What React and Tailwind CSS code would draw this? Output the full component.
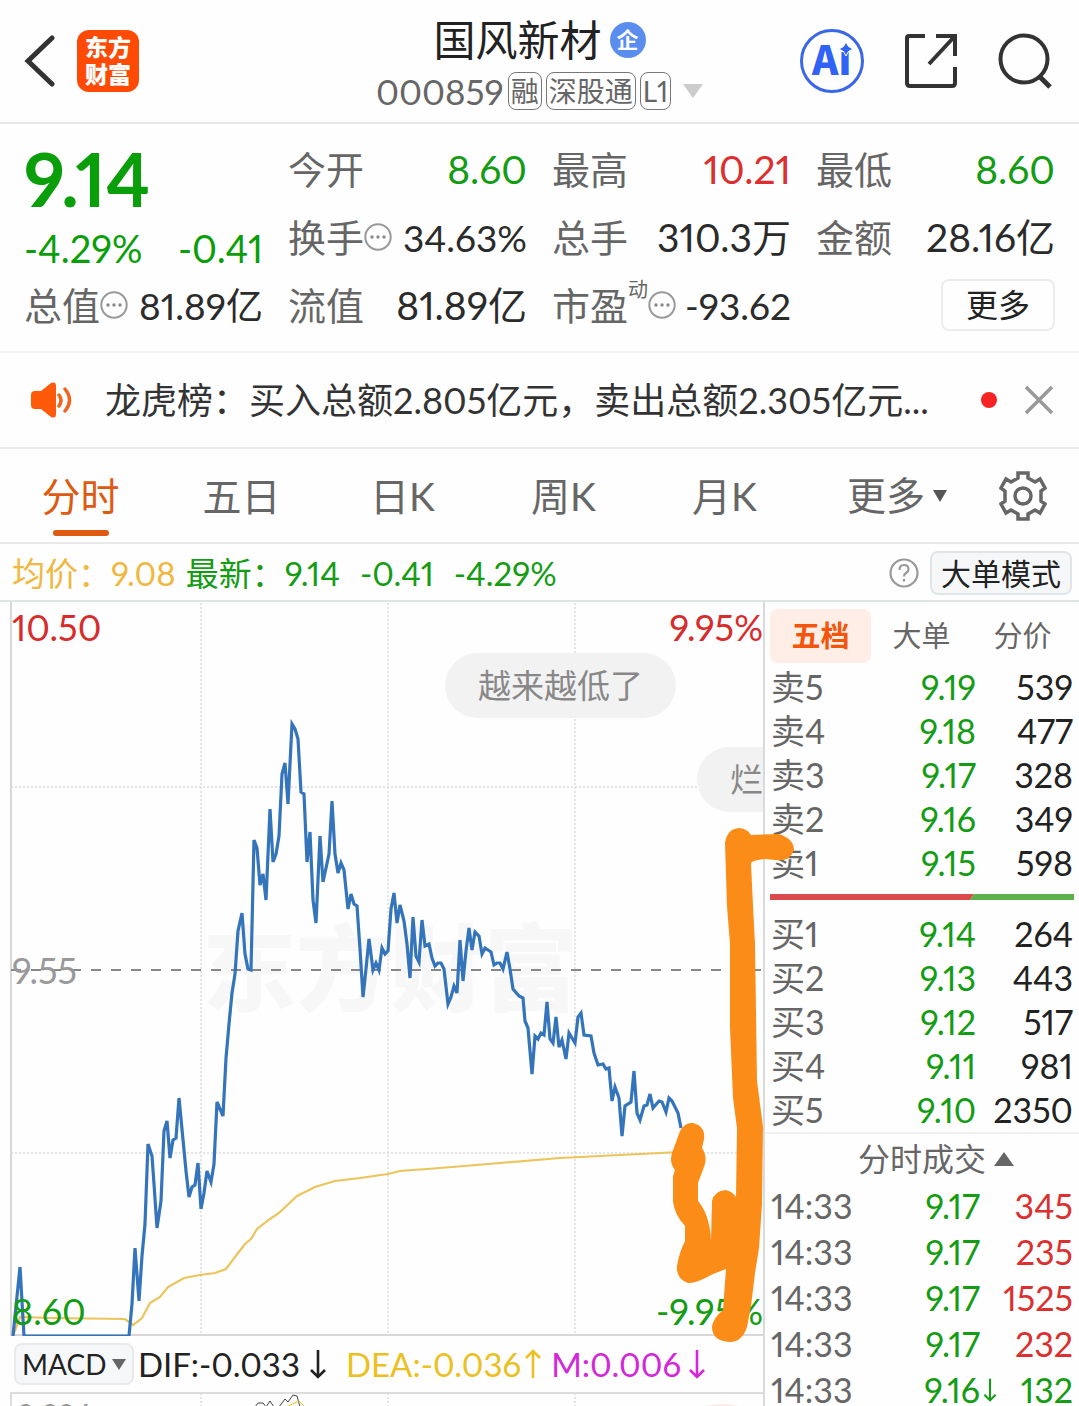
import React, { useState } from "react";

const PRICE_LINE =
  "13,1335 20,1266 24,1335 129,1335 132,1303 135,1247 139,1300 142,1255 145,1223 148,1143 152,1155 154,1183 157,1227 161,1200 164,1130 167,1120 170,1157 173,1139 176,1137 179,1097 186,1170 189,1196 192,1186 195,1184 198,1162 201,1208 204,1192 207,1170 211,1181 214,1163 217,1101 223,1115 226,1057 229,1023 232,992 235,973 238,930 242,912 245,953 248,968 251,969 254,839 257,847 260,884 263,873 266,899 270,808 273,861 276,853 279,835 282,773 285,762 288,803 292,723 295,728 298,738 301,791 304,793 307,861 310,831 313,899 316,922 320,835 323,881 329,853 332,800 335,853 338,872 341,862 344,869 348,908 351,893 354,903 357,905 360,948 363,996 366,968 369,938 373,969 376,962 379,969 382,947 385,953 388,950 391,908 394,892 397,922 400,904 404,920 407,943 410,977 413,916 416,955 419,961 422,919 425,945 429,943 432,957 435,965 438,962 441,962 444,968 448,1003 451,996 454,985 457,992 460,939 463,980 466,950 469,927 472,949 475,931 479,935 482,953 485,947 491,951 494,964 497,962 500,962 503,968 507,951 510,968 513,988 519,995 523,997 525,1020 528,1027 532,1073 535,1035 538,1038 541,1032 544,1034 547,1001 550,1038 553,1042 556,1016 559,1046 562,1039 566,1058 569,1032 572,1037 575,1042 578,1016 581,1012 584,1034 591,1035 594,1052 598,1064 603,1063 606,1068 609,1067 612,1100 615,1086 619,1097 622,1135 625,1105 631,1101 634,1070 637,1112 640,1119 644,1105 647,1104 650,1093 653,1107 659,1100 662,1101 666,1111 669,1097 672,1100 678,1112 681,1127";

const AVERAGE_LINE =
  "13,1335 20,1316 50,1317 125,1318 133,1324 142,1317 150,1302 160,1296 168,1286 184,1277 200,1274 215,1272 226,1268 235,1256 245,1243 251,1238 257,1228 270,1218 279,1212 297,1195 315,1186 335,1180 360,1177 388,1173 400,1170 440,1167 500,1162 560,1157 620,1154 680,1151";

const tabs = ["分时", "五日", "日K", "周K", "月K"];

const sellOrders = [
  { label: "卖5", price: "9.19", volume: 539 },
  { label: "卖4", price: "9.18", volume: 477 },
  { label: "卖3", price: "9.17", volume: 328 },
  { label: "卖2", price: "9.16", volume: 349 },
  { label: "卖1", price: "9.15", volume: 598 },
];

const buyOrders = [
  { label: "买1", price: "9.14", volume: 264 },
  { label: "买2", price: "9.13", volume: 443 },
  { label: "买3", price: "9.12", volume: 517 },
  { label: "买4", price: "9.11", volume: 981 },
  { label: "买5", price: "9.10", volume: 2350 },
];

const trades = [
  { id: 1, time: "14:33", price: "9.17", volume: 345, side: "buy" },
  { id: 2, time: "14:33", price: "9.17", volume: 235, side: "buy" },
  { id: 3, time: "14:33", price: "9.17", volume: 1525, side: "buy" },
  { id: 4, time: "14:33", price: "9.17", volume: 232, side: "buy" },
  { id: 5, time: "14:33", price: "9.16", volume: 132, side: "sell", down: true },
];

function MoreDots() {
  return (
    <svg className="h-7 w-7 shrink-0" viewBox="0 0 28 28" fill="none">
      <circle cx="14" cy="14" r="12.7" stroke="#999" strokeWidth="2" />
      <circle cx="8" cy="14" r="1.7" fill="#888" />
      <circle cx="14" cy="14" r="1.7" fill="#888" />
      <circle cx="20" cy="14" r="1.7" fill="#888" />
    </svg>
  );
}

function Arrow({ up, className }) {
  return (
    <svg className={className} viewBox="0 0 16 30" fill="none" stroke="currentColor" strokeWidth="2.6">
      <path d={up ? "M8 29V2M1 9l7-7 7 7" : "M8 1v27M1 21l7 7 7-7"} />
    </svg>
  );
}

function Stat({ label, value, color = "text-[#2b2b2b]", dots, sup }) {
  return (
    <div className="flex items-center justify-between whitespace-nowrap">
      <span className="flex items-center text-[#666]">
        {label}
        {sup && <sup className="-top-4 text-xl leading-none">{sup}</sup>}
        {dots && <MoreDots />}
      </span>
      <span className={dots ? `text-[37px] ${color}` : `text-[39px] ${color}`}>{value}</span>
    </div>
  );
}

function Header() {
  return (
    <header className="grid h-[124px] grid-cols-[1fr_auto_1fr] items-center border-b-2 border-[#e6e8ea]">
      <div className="flex items-center gap-[22px] pl-6">
        <button aria-label="返回">
          <svg className="h-[52px] w-[31px]" viewBox="0 0 31 52" fill="none" stroke="#333" strokeWidth="5">
            <path d="M28 3L4 26l24 23" strokeLinecap="round" />
          </svg>
        </button>
        <a
          href="#home"
          className="grid h-[62px] w-[62px] content-center justify-center rounded-xl bg-[#ff4a05] text-center text-[23px] leading-[27px] font-black text-white"
        >
          <span>东方</span>
          <span>财富</span>
        </a>
      </div>

      <div className="flex flex-col items-center">
        <div className="flex items-center gap-2">
          <h1 className="text-[42px] leading-[56px] text-[#222]">国风新材</h1>
          <span className="flex h-9 w-9 items-center justify-center rounded-full bg-[#5b8def] text-[22px] leading-none font-bold text-white">
            企
          </span>
        </div>
        <button className="mt-1 flex items-center gap-1 text-[28px] leading-9 text-[#666]">
          <span className="text-[35px]">000859</span>
          <span className="rounded-lg border border-[#777] px-[2px]">融</span>
          <span className="rounded-lg border border-[#777] px-[2px]">深股通</span>
          <span className="rounded-lg border border-[#777] px-[2px]">L1</span>
          <svg className="ml-2 h-[14px] w-5" viewBox="0 0 20 14">
            <path d="M0 0h20L10 14z" fill="#ccc" />
          </svg>
        </button>
      </div>

      <div className="flex items-center justify-end gap-10 pr-[27px]">
        <button aria-label="AI">
          <svg className="h-16 w-16" viewBox="0 0 64 64">
            <text
              x="12"
              y="46"
              fontSize="40"
              fontWeight="900"
              fill="#2f62f5"
              className="font-['Noto_Sans_CJK_SC',sans-serif]"
            >
              Ai
            </text>
            <rect x="38" y="10" width="15" height="13" fill="#fefefe" />
            <path d="M46 13l2.500 4.500L53 20l-4.500 2.500L46 27l-2.500-4.500L39 20l4.500-2.500z" fill="#2f62f5" stroke="#fefefe" />
            <circle cx="32" cy="32" r="30.5" fill="none" stroke="#3a66e8" strokeWidth="3" />
          </svg>
        </button>
        <button aria-label="分享">
          <svg className="h-14 w-[54px]" viewBox="0 0 54 56" fill="none" stroke="#333" strokeWidth="4">
            <path d="M21 3H5q-2 0-2 2v45q0 3 3 3h42q3 0 3-3V34M32 3h19v20M51 3L25 31" />
          </svg>
        </button>
        <button aria-label="搜索">
          <svg className="h-14 w-[54px]" viewBox="0 0 54 56" fill="none" stroke="#333" strokeWidth="4">
            <circle cx="26" cy="26" r="23.5" />
            <path d="M41 43l11 11" strokeWidth="5" />
          </svg>
        </button>
      </div>
    </header>
  );
}

function Quote() {
  return (
    <section className="grid auto-rows-[68px] grid-cols-4 gap-x-[25px] border-b-2 border-[#f2f2f2] px-6 pt-[11px] pb-3 text-[38px] leading-none">
      <div className="row-span-2 flex flex-col justify-between pt-2 text-[#0a9e0a]">
        <strong className="text-[74px] leading-[72px] font-bold">9.14</strong>
        <div className="flex justify-between leading-[46px]">
          <span>-4.29%</span>
          <span>-0.41</span>
        </div>
      </div>
      <Stat label="今开" value="8.60" color="text-[#149c14]" />
      <Stat label="最高" value="10.21" color="text-[#dc2f2f]" />
      <Stat label="最低" value="8.60" color="text-[#149c14]" />
      <Stat label="换手" value="34.63%" dots />
      <Stat label="总手" value="310.3万" />
      <Stat label="金额" value="28.16亿" />
      <Stat label="总值" value="81.89亿" dots />
      <Stat label="流值" value="81.89亿" />
      <Stat label="市盈" value="-93.62" sup="动" dots />
      <button className="h-[52px] w-[114px] self-center justify-self-end rounded-lg border-2 border-[#eaecee] text-[32px] text-[#222]">
        更多
      </button>
    </section>
  );
}

function Notice() {
  return (
    <section className="flex h-[96px] items-center border-b-2 border-[#e6e8ea] pr-[26px] pl-[31px]">
      <svg className="h-9 w-[42px] shrink-0" viewBox="0 0 42 36" fill="none">
        <path
          d="M4 9h6L20 1q5-2 5 3v28q0 5-5 3L10 27H4q-4 0-4-4V13q0-4 4-4z"
          fill="#ff5a0a"
        />
        <path d="M28 13q4 5 0 11M34 7q9 11 0 22" stroke="#f0641e" strokeWidth="3.5" strokeLinecap="round" />
      </svg>
      <a href="#notice" className="ml-8 min-w-0 flex-1 text-4xl whitespace-nowrap text-[#333]">
        龙虎榜：买入总额2.805亿元，卖出总额2.305亿元...
      </a>
      <span className="ml-8 h-4 w-4 shrink-0 rounded-full bg-[#f52323]" />
      <button aria-label="关闭" className="ml-7">
        <svg className="h-7 w-7" viewBox="0 0 28 28" stroke="#999" strokeWidth="3.5">
          <path d="M1 1l26 26M27 1L1 27" />
        </svg>
      </button>
    </section>
  );
}

function Tabs() {
  const [active, setActive] = useState("分时");

  return (
    <nav className="grid h-[95px] grid-cols-[161fr_161fr_161fr_161fr_161fr_184fr_90fr] border-b-2 border-[#e6e8ea] text-[39px] text-[#666]">
      {tabs.map((tab) => (
        <button
          key={tab}
          onClick={() => setActive(tab)}
          className={
            tab === active
              ? "flex flex-col items-center justify-end pb-[6px] text-[#dd5a10]"
              : "flex flex-col items-center justify-end pb-[6px]"
          }
        >
          <span className="leading-[68px]">{tab}</span>
          <span
            className={
              tab === active ? "h-[6px] w-14 rounded-full bg-[#dd5a10]" : "h-[6px] w-14"
            }
          />
        </button>
      ))}
      <button className="flex items-center justify-center gap-2">
        更多
        <svg className="h-3 w-[14px]" viewBox="0 0 14 12">
          <path d="M0 0h14L7 12z" fill="#555" />
        </svg>
      </button>
      <button aria-label="设置" className="pl-[10px]">
        <svg className="h-[50px] w-12" viewBox="0 0 48 50" fill="none" stroke="#666" strokeWidth="3.5">
          <path d="M19 2h10v5l7 4 5-3 5 9-4 3v10l4 3-5 9-5-3-7 4v5H19v-5l-7-4-5 3-5-9 4-3V20l-4-3 5-9 5 3 7-4z" />
          <circle cx="24" cy="25" r="8" />
        </svg>
      </button>
    </nav>
  );
}

function InfoBar() {
  return (
    <section className="flex h-[58px] items-center border-b-2 border-[#e0e4e5] pt-[2px] pr-[7px] pl-3 text-[33px] leading-none whitespace-pre text-[#149c14]">
      <span className="text-[#f0b840]">均价：9.08</span>
      <span className="ml-[10px]">最新：9.14</span>
      <span className="ml-5">-0.41</span>
      <span className="ml-5">-4.29%</span>
      <button aria-label="说明" className="ml-auto">
        <svg className="h-[30px] w-[30px]" viewBox="0 0 30 30" fill="none" stroke="#999" strokeWidth="2.2">
          <circle cx="15" cy="15" r="13.5" />
          <path d="M10.500 12q0-5 4.500-5t4.500 4.200q0 2.300-2.500 3.800-2 1.200-2 3.500" />
          <path d="M15 21v2.500" />
        </svg>
      </button>
      <button className="ml-[11px] h-11 rounded-lg border-2 border-[#e2e5e8] bg-[#f6f7f9] px-[9px] text-[30px] text-[#222]">
        大单模式
      </button>
    </section>
  );
}

function PriceChart() {
  return (
    <div className="relative h-[734px] overflow-hidden text-[36px] leading-none">
      <span className="absolute top-[306px] left-[202px] text-[94px] leading-[120px] font-black text-[#f7f7f7]">
        东方财富
      </span>
      <svg className="absolute inset-0 h-full w-full" viewBox="0 601 763 734" preserveAspectRatio="none" fill="none">
        <g stroke="#dcdcdc" strokeWidth="1.500" strokeDasharray="2 2">
          <path d="M201 602v733M388 602v733M575 602v733M11 786h752M11 1152h752" />
        </g>
        <path d="M11 601v733h752" stroke="#d8d8d8" strokeWidth="2" />
        <path d="M11 969h752" stroke="#888" strokeWidth="2" strokeDasharray="10 10" />
        <polyline points={AVERAGE_LINE} stroke="#ecc45c" strokeWidth="2.200" />
        <polyline points={PRICE_LINE} stroke="#3474bb" strokeWidth="3.200" />
      </svg>
      <span className="absolute top-[7px] left-3 text-[#d82c2c]">10.50</span>
      <span className="absolute top-[7px] right-0 text-[#d82c2c]">9.95%</span>
      <span className="absolute top-[350px] left-3 text-[#999]">9.55</span>
      <span className="absolute bottom-[7px] left-3 text-[#149c14]">8.60</span>
      <span className="absolute right-0 bottom-[7px] text-[#149c14]">-9.95%</span>
      <span className="absolute top-[51px] left-[445px] rounded-full bg-[#f2f2f2] px-[33px] py-4 text-[33px] text-[#888]">
        越来越低了
      </span>
      <span className="absolute top-[145px] left-[697px] w-[200px] rounded-full bg-[#f2f2f2] px-[33px] py-4 text-[33px] text-[#888]">
        烂
      </span>
    </div>
  );
}

function MacdPanel() {
  return (
    <>
      <div className="flex h-[56px] items-center pl-[14px] text-[33px] leading-none whitespace-nowrap">
        <button className="flex h-[42px] w-[120px] items-center justify-between rounded-lg border-2 border-[#e8eaec] bg-[#f6f7f9] px-[6px] text-[28px] text-[#222]">
          MACD
          <svg className="h-[11px] w-[14px] shrink-0" viewBox="0 0 14 11">
            <path d="M0 0h14L7 11z" fill="#666" />
          </svg>
        </button>
        <span className="ml-1 text-[#222]">DIF:-0.033</span>
        <Arrow className="ml-[10px] h-[30px] w-4 text-[#222]" />
        <span className="ml-5 text-[#eac022]">DEA:-0.036</span>
        <Arrow up className="ml-1 h-[30px] w-4 text-[#eac022]" />
        <span className="ml-[10px] text-[#d228d8]">M:0.006</span>
        <Arrow className="ml-2 h-[30px] w-4 text-[#d228d8]" />
      </div>
      <div className="relative h-[120px] overflow-hidden">
        <svg className="absolute inset-0 h-full w-full" viewBox="0 1392 763 120" preserveAspectRatio="none" fill="none">
          <path d="M763 1393H11v120" stroke="#dcdcdc" strokeWidth="2" />
          <path d="M201 1393v119M388 1393v119M575 1393v119" stroke="#dcdcdc" strokeWidth="1.500" strokeDasharray="2 2" />
          <path d="M255 1407l3-4h5l3 4 4-6 4 6h5l6-8 3 3 5-7 4 1 3 11" stroke="#444" />
          <path d="M286 1407l13-6 6 6" stroke="#eac022" />
          <ellipse cx="722" cy="1410" rx="22" ry="6" fill="#fdeae6" />
        </svg>
        <span className="absolute top-[7px] left-4 text-[29px] leading-none text-[#999]">0.224</span>
      </div>
    </>
  );
}

function OrderTable({ rows, label }) {
  return (
    <table aria-label={label} className="w-full table-fixed">
      <tbody>
        {rows.map((row) => (
          <tr key={row.label} className="h-11">
            <td className="w-[90px] p-0 pl-[6px] text-[#666]">{row.label}</td>
            <td className="p-0 text-right text-[#149c14]">{row.price}</td>
            <td className="w-[103px] p-0 pr-[6px] text-right text-[#222]">{row.volume}</td>
          </tr>
        ))}
      </tbody>
    </table>
  );
}

function OrderBook() {
  const [view, setView] = useState("五档");

  return (
    <aside className="w-[316px] shrink-0 border-l-2 border-[#d8dadc] text-[34px] leading-none">
      <div className="flex h-[63px] items-center pt-1 pl-[5px] text-[29px] text-[#666]">
        {["五档", "大单", "分价"].map((item) => (
          <button
            key={item}
            onClick={() => setView(item)}
            className={
              item === view
                ? "h-[54px] w-[101px] rounded-lg bg-[#ffeee6] font-bold text-[#f2560c]"
                : "h-[54px] w-[101px]"
            }
          >
            {item}
          </button>
        ))}
      </div>
      <OrderTable rows={sellOrders} label="卖盘" />
      <svg className="mx-[5px] mt-[9px] mb-3 h-[6px] w-[304px]" viewBox="0 0 304 6" preserveAspectRatio="none">
        <path d="M0 0h204l-4 6H0z" fill="#dc4b4b" />
        <path d="M204 0h100v6H200z" fill="#5db04b" />
      </svg>
      <OrderTable rows={buyOrders} label="买盘" />
      <button className="flex h-[51px] w-full items-center justify-center gap-2 border-t-2 border-[#eef0f1] pl-[28px] text-[32px] text-[#666]">
        <span>分时成交</span>
        <svg className="h-[14px] w-5" viewBox="0 0 20 14">
          <path d="M0 14h20L10 0z" fill="#666" />
        </svg>
      </button>
      <table aria-label="分时成交" className="w-full table-fixed">
        <tbody>
          {trades.map((trade) => (
            <tr key={trade.id} className="h-[46px]">
              <td className="w-[96px] p-0 pl-[6px] text-[#666]">{trade.time}</td>
              <td className="p-0 text-[#149c14]">
                <span className="flex items-center justify-end">
                  {trade.price}
                  <span className="w-[19px] pl-[3px]">
                    {trade.down && <Arrow className="h-6 w-[14px]" />}
                  </span>
                </span>
              </td>
              <td
                className={
                  trade.side === "buy"
                    ? "w-[80px] p-0 pr-[6px] text-right text-[#dc2f2f]"
                    : "w-[80px] p-0 pr-[6px] text-right text-[#149c14]"
                }
              >
                {trade.volume}
              </td>
            </tr>
          ))}
        </tbody>
      </table>
    </aside>
  );
}

// hand-drawn marker strokes over the chart
function Marker() {
  return (
    <svg
      className="pointer-events-none absolute top-0 left-0 w-full"
      viewBox="0 601 1079 804"
      fill="#fb8c17"
    >
      <path d="M725 842Q727 828 739 827Q748 828 751 834L779 833Q794 838 794 849Q790 861 776 859L765 858Q754 859 751 862L753 905L755 943L757 1080L763 1126L762 1203L759 1247L755 1272L751 1305L747 1326Q742 1341 730 1341Q712 1340 712 1326Q713 1317 723 1309L726 1268L713 1273Q695 1283 688 1282Q676 1278 677 1265Q679 1252 685 1240V1225Q674 1213 673 1200V1175L675 1169Q669 1162 672 1152L680 1130Q685 1121 693 1122Q706 1125 704 1138L702 1147Q708 1156 704 1166L698 1182V1200Q710 1214 711 1240L712 1200Q714 1190 726 1189Q733 1191 736 1196L737 1127L733 1097L730 1027V943L727 905Z" />
    </svg>
  );
}

export default function App() {
  return (
    <div className="flex h-screen flex-col overflow-hidden bg-[#fefefe] font-['Lato','Noto_Sans_CJK_SC',sans-serif] proportional-nums *:shrink-0">
      <Header />
      <Quote />
      <Notice />
      <Tabs />
      <InfoBar />
      <main className="relative flex">
        <div className="min-w-0 flex-1">
          <PriceChart />
          <MacdPanel />
        </div>
        <OrderBook />
        <Marker />
      </main>
    </div>
  );
}
